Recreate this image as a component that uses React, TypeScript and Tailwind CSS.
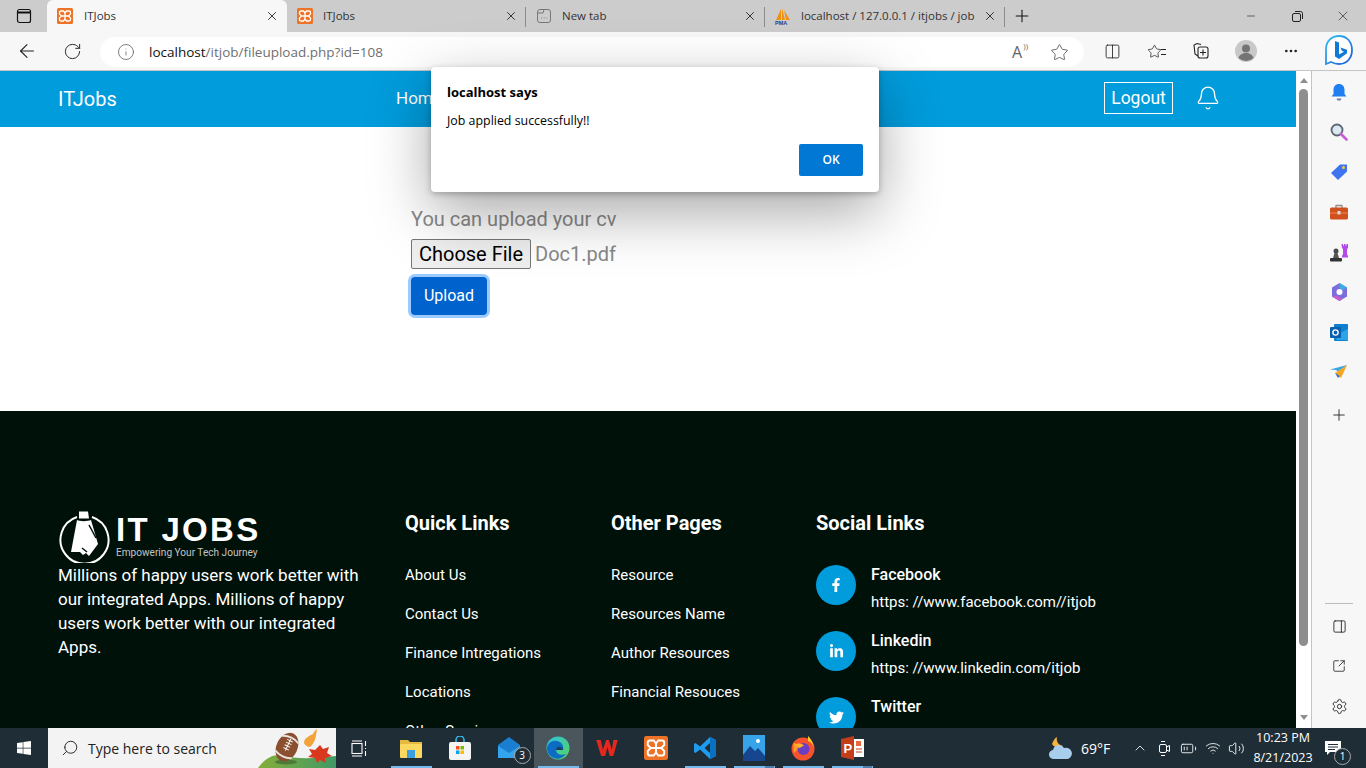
import React from 'react';
import {
  ArrowLeft, RotateCw, Info, Star, X, Plus, Minus, Bell, Search, ChevronUp,
  Columns2, Ellipsis, PanelRight, SquareArrowOutUpRight, Settings, Volume2, Wifi, BatteryMedium,
} from 'lucide-react';
import { FaFacebookF, FaLinkedinIn, FaTwitter, FaWindows } from 'react-icons/fa';

const UI_FONT = 'font-["Open_Sans","Noto_Sans",sans-serif]';

function Xampp({ size = 16 }: { size?: number }) {
  return (
    <svg width={size} height={size} viewBox="0 0 16 16" className="shrink-0">
      <rect width="16" height="16" rx="1.5" fill="#ee7326" />
      <path d="M4 3h2.5L8 5l1.5-2H12c1 0 1.500.5 1.500 1.500V6l-2 2 2 2v1.500c0 1-.5 1.500-1.500 1.500H9.500L8 11l-1.500 2H4c-1 0-1.500-.5-1.500-1.500V10l2-2-2-2V4.500C2.500 3.500 3 3 4 3zM4.500 8h7M8 5v6" fill="none" stroke="#fff" strokeWidth="1.3" />
    </svg>
  );
}

function PmaIcon() {
  return (
    <svg width="18" height="18" viewBox="0 0 18 18" className="shrink-0">
      <path d="M2 13 7 2v11zM8 13V1l3 12zM12 13 10 3l6 10z" fill="#f29111" />
      <text x="1" y="18" fontSize="5.5" fontWeight="700" fill="#24408e" fontFamily="Liberation Sans">PMA</text>
    </svg>
  );
}

function Tab({ width, active, icon, label, sep }: { width: string; active?: boolean; icon: React.ReactNode; label: string; sep?: boolean }) {
  return (
    <div className={`${width} h-[32px] flex items-center pl-[10px] pr-[8px] relative ${active ? 'bg-[#f7f7f7] rounded-t-[6px]' : ''}`}>
      <div className="w-[16px] flex justify-center">{icon}</div>
      <span className={`${active ? 'ml-[11px]' : 'ml-[10px]'} mr-[7px] text-[11.5px] text-[#333] whitespace-nowrap overflow-hidden flex-1`}>{label}</span>
      <X size={14} strokeWidth={1.5} className="text-[#222]" />
      {sep && <div className="absolute right-0 top-[7px] h-[20px] w-px bg-[#8c8c8c]" />}
    </div>
  );
}

function TopBar() {
  return (
    <div className={`h-[32px] bg-[#cccccc] flex ${UI_FONT}`}>
      <div className="w-[47px] flex items-center justify-center">
        <svg width="16" height="16" viewBox="0 0 16 16" fill="none" stroke="#111" strokeWidth="1.2">
          <rect x="1.5" y="1.5" width="13" height="13" rx="2" />
          <path d="M1.5 4.5h13" strokeWidth="2" />
        </svg>
      </div>
      <Tab width="w-[240px]" active icon={<Xampp />} label="ITJobs" />
      <Tab width="w-[239px]" icon={<Xampp />} label="ITJobs" sep />
      <Tab width="w-[239px]" icon={
        <svg width="16" height="16" viewBox="0 0 16 16" fill="none" stroke="#777" strokeWidth="1"><rect x="1.5" y="1.5" width="13" height="13" rx="2.5" /><path d="M1.5 5h5.500l1-3.500M5 10h.8M7.800 10h.8M10.500 10h.8" /></svg>
      } label="New tab" sep />
      <Tab width="w-[240px]" icon={<PmaIcon />} label="localhost / 127.0.0.1 / itjobs / job" sep />
      <div className="w-[33px] flex items-center justify-center">
        <Plus size={20} strokeWidth={1.25} className="text-[#111]" />
      </div>
      <div className="flex-1" />
      <div className="flex items-center text-[#222]">
        <div className="w-[46px] flex justify-center"><Minus size={12} strokeWidth={1.25} /></div>
        <div className="w-[46px] flex justify-center">
          <svg width="11" height="11" viewBox="0 0 11 11" fill="none" stroke="#222"><rect x=".5" y="2.5" width="8" height="8" rx="1.5" /><path d="M3 .5h5.500a2 2 0 0 1 2 2V8" /></svg>
        </div>
        <div className="w-[46px] flex justify-center"><X size={16} strokeWidth={1} /></div>
      </div>
    </div>
  );
}

function BingIcon() {
  return (
    <svg width="30" height="34" viewBox="0 0 30 34">
      <defs>
        <linearGradient id="bingBorder" x1="0" y1="0" x2="1" y2="1">
          <stop offset="0" stopColor="#36c0f0" />
          <stop offset="1" stopColor="#1c5cd8" />
        </linearGradient>
      </defs>
      <path d="M15 2C8 2 2 7 2 15v15l5-2c2 1 5 2 8 2 8 0 13-6 13-14S23 2 15 2z" fill="#fff" stroke="url(#bingBorder)" strokeWidth="1.8" />
      <path d="M11 7l4 1.500v12l5-2.800-2.200-1-1.300-3.200 6.500 2.300v3.500L15 25l-4-2.500z" fill="#0f7ad8" />
    </svg>
  );
}

function Toolbar() {
  return (
    <div className={`h-[38px] bg-[#f7f7f7] flex items-center ${UI_FONT}`}>
      <div className="w-[50px] flex justify-center pl-[4px]"><ArrowLeft size={22} strokeWidth={1.2} className="text-[#222]" /></div>
      <div className="w-[44px] flex justify-center"><RotateCw size={19} strokeWidth={1.2} className="text-[#222]" /></div>
      <div className="w-[984px] ml-[6px] h-[30px] mt-[2px] bg-white rounded-full flex items-center pl-[17px] pr-[15px]">
        <Info size={18} strokeWidth={1.1} className="text-[#666]" />
        <div className="ml-[14px] text-[13.5px] flex-1"><span className="text-[#111]">localhost</span><span className="text-[#707070]">/itjob/fileupload.php?id=108</span></div>
        <span className="text-[16px] text-[#666] mr-[28px] relative leading-none">A<span className="absolute -right-[6px] -top-[2px] text-[8px]">))</span></span>
        <Star size={19} strokeWidth={1.1} className="text-[#555]" />
      </div>
      <div className="flex-1 flex items-center text-[#222]">
        <div className="w-[44px] ml-[6px] flex justify-center"><Columns2 size={17} strokeWidth={1.2} /></div>
        <div className="w-[44px] flex justify-center relative"><Star size={15} strokeWidth={1.2} className="-ml-[3px]" /><div className="absolute right-[12px] top-[5px] w-[5px] h-[6px] border-y border-[#222]" /></div>
        <div className="w-[44px] flex justify-center">
          <svg width="17" height="18" viewBox="0 0 17 18" fill="none" stroke="#222" strokeWidth="1.1"><path d="M9 2.500 5 1.500 2 3l1 9 3 2" /><rect x="6" y="5" width="10" height="11" rx="2" /><path d="M11 7.500v6M8 10.500h6" /></svg>
        </div>
        <div className="w-[47px] flex justify-center">
          <svg width="22" height="22" viewBox="0 0 22 22"><circle cx="11" cy="11" r="11" fill="#c8c8c8" /><circle cx="11" cy="8.5" r="4" fill="#747474" /><path d="M3.500 18c1-3.500 4-5 7.500-5s6.500 1.500 7.500 5a11 11 0 0 1-15 0z" fill="#747474" /></svg>
        </div>
        <div className="w-[44px] flex justify-center"><Ellipsis size={16} strokeWidth={2} /></div>
        <div className="flex-1 flex justify-center pr-[2px]"><BingIcon /></div>
      </div>
    </div>
  );
}

function ScrollBar() {
  return (
    <div className="w-[15px] bg-white flex flex-col items-center">
      <div className="h-[18px] flex items-center justify-center">
        <div className="w-0 h-0 border-x-[4px] border-x-transparent border-b-[5px] border-b-[#8e8e8e]" />
      </div>
      <div className="w-[9px] h-[557px] bg-[#8e8e8e] rounded-full" />
      <div className="flex-1 flex items-end justify-center pb-[8px]">
        <div className="w-0 h-0 border-x-[4px] border-x-transparent border-t-[5px] border-t-[#8e8e8e]" />
      </div>
    </div>
  );
}

function SideSlot({ children }: { children: React.ReactNode }) {
  return <div className="h-[40px] flex items-center justify-center">{children}</div>;
}

function SidePanel() {
  return (
    <div className="flex-1 bg-[#f7f7f7] border-l border-[#c4c4c4] flex flex-col pt-[1px] pb-[2px]">
      <SideSlot>
        <svg width="16" height="18" viewBox="0 0 16 18"><path d="M8 1c3.500 0 5.500 2.500 5.500 6v4l2 2.500H.5l2-2.500V7C2.500 3.500 4.500 1 8 1z" fill="#1f7ef0" /><path d="M5.500 15.500h5l-1 2h-3z" fill="#6b7fa5" /></svg>
      </SideSlot>
      <SideSlot>
        <svg width="18" height="18" viewBox="0 0 18 18"><circle cx="7" cy="7" r="5.500" fill="#dbe7f3" stroke="#5d6570" strokeWidth="1.8" /><path d="M11 11l5.500 5.500" stroke="#c65cd6" strokeWidth="2.6" strokeLinecap="round" /></svg>
      </SideSlot>
      <SideSlot>
        <svg width="18" height="18" viewBox="0 0 18 18"><path d="M1 10 10 1.500h7v7L8 17z" fill="#3f74f0" /><circle cx="13.5" cy="4.500" r="1.500" fill="#f5c945" /></svg>
      </SideSlot>
      <SideSlot>
        <svg width="18" height="16" viewBox="0 0 18 16"><path d="M6 4V1.500h6V4" fill="none" stroke="#8f8f8f" strokeWidth="1.3" /><rect y="3.5" width="18" height="12" rx="1.5" fill="#d0501e" /><rect y="8.5" width="18" height="1" fill="#f08a50" /><rect x="7.5" y="7" width="3" height="3.5" fill="#d8d8d8" /></svg>
      </SideSlot>
      <SideSlot>
        <svg width="19" height="19" viewBox="0 0 19 19"><path d="M11.500 1h1.500v1.500h1V1h1.500v1.500h1V1h1.500v4l-1 1v5l1 2v1.500h-6V13l1-2V6l-1-1z" fill="#b64ae8" /><circle cx="6" cy="8" r="2.5" fill="#4b4b4b" /><path d="M4.500 10h3l1.500 5H3z" fill="#555" /><rect y="15" width="12" height="3.5" rx="1" fill="#333" /></svg>
      </SideSlot>
      <SideSlot>
        <svg width="17" height="18" viewBox="0 0 17 18"><path d="M8.500 0 16 4.500v9L8.500 18 1 13.500v-9z" fill="#7b6fdc" /><path d="M8.500 0 16 4.500 12 7 8.500 5z" fill="#3bb0e0" /><path d="M1 13.500 8.500 18l3-2-6-3.500z" fill="#c45fc8" /><circle cx="8.5" cy="9" r="3" fill="#fff" /></svg>
      </SideSlot>
      <SideSlot>
        <svg width="18" height="17" viewBox="0 0 18 17"><rect x="4" y="0" width="14" height="17" rx="1" fill="#0e7fd0" /><path d="M10 9 18 5v11H6z" fill="#2ba5e8" /><rect y="3" width="11" height="11" rx="1" fill="#0a5fae" /><circle cx="5.5" cy="8.5" r="2.6" fill="none" stroke="#fff" strokeWidth="1.4" /></svg>
      </SideSlot>
      <SideSlot>
        <svg width="18" height="14" viewBox="0 0 18 14"><path d="M0 4.500 17 0 9 7.500 6 5z" fill="#36a6e8" /><path d="M17 0 11 13 5 8z" fill="#f5a623" /><path d="M5 8l3 5 2-2z" fill="#2a78c8" /></svg>
      </SideSlot>
      <div className="mt-[3px]">
        <SideSlot><Plus size={18} strokeWidth={1.2} className="text-[#222]" /></SideSlot>
      </div>
      <div className="flex-1" />
      <div className="mx-[13px] h-px bg-[#bdbdbd] mb-[2px]" />
      <SideSlot><PanelRight size={15} strokeWidth={1.4} className="text-[#222]" /></SideSlot>
      <SideSlot><SquareArrowOutUpRight size={14} strokeWidth={1.4} className="text-[#222]" /></SideSlot>
      <SideSlot><Settings size={17} strokeWidth={1.3} className="text-[#222]" /></SideSlot>
    </div>
  );
}

function Navbar() {
  return (
    <div className="h-[56px] bg-[#009cdc] flex items-center pl-[58px] pr-[75px] text-white">
      <div className="w-[338px] text-[20px]">ITJobs</div>
      <div className="text-[17px]">Home</div>
      <div className="ml-auto mb-[2px] h-[32px] w-[69px] border border-white flex items-center justify-center text-[17.5px] pt-[1px]">Logout</div>
      <Bell size={26} strokeWidth={1.2} className="ml-[22px] mb-[2px]" />
    </div>
  );
}

function UploadSection() {
  return (
    <div className="h-[284px] bg-white pl-[411px] pt-[80px] text-[#888]">
      <div className="text-[20px] leading-[24px]">You can upload your cv</div>
      <div className="mt-[8px] flex items-center text-[20px] h-[30px]">
        <div className="w-[120px] h-[30px] bg-[#efefef] border border-[#767676] rounded-[2px] text-black flex items-center justify-center">Choose File</div>
        <span className="ml-[4px]">Doc1.pdf</span>
      </div>
      <button className="mt-[8px] w-[76px] h-[38px] bg-[#0062cc] text-white text-[16px] rounded-[4px] ring-[3px] ring-[#9bcbff]">Upload</button>
    </div>
  );
}

function Logo() {
  return (
    <div className="flex h-[53px]">
      <svg width="52" height="53" viewBox="0 0 52 53" className="shrink-0">
        <path d="M19 7A24 24 0 1 0 34 7" fill="none" stroke="#fff" strokeWidth="2" />
        <path d="M21 1.500h9l1 7h-10z" fill="#fff" />
        <path d="M19 10c2 1.500 11 1.500 14 0l7 24-9 12-3-3-3 2-3-3-9 0z" fill="#fff" />
        <path d="M31 15l7 13" stroke="#001109" strokeWidth="1.5" />
        <path d="M24 38l5 4" stroke="#001109" strokeWidth="1.5" />
      </svg>
      <div className="ml-[6px] font-['Liberation_Sans',sans-serif] leading-none">
        <div className="text-[33px] font-bold text-white tracking-[2.3px] h-[33px] mt-[3px] leading-[33px] whitespace-nowrap">IT JOBS</div>
        <div className="text-[10.1px] text-[#c4c4c4] mt-[2px] whitespace-nowrap font-['Roboto',sans-serif]">Empowering Your Tech Journey</div>
      </div>
    </div>
  );
}

function FooterLinks({ title, width, links }: { title: string; width: string; links: string[] }) {
  return (
    <div className={width}>
      <h3 className="text-[20px] leading-[24px] font-bold text-white">{title}</h3>
      <div className="mt-[28px] flex flex-col gap-[15px]">
        {links.map(l => <div key={l} className="text-[15px] leading-[24px] text-white whitespace-nowrap">{l}</div>)}
      </div>
    </div>
  );
}

const SOCIALS = [
  { name: 'Facebook', url: 'https: //www.facebook.com//itjob', icon: <FaFacebookF size={14} /> },
  { name: 'Linkedin', url: 'https: //www.linkedin.com/itjob', icon: <FaLinkedinIn size={15} /> },
  { name: 'Twitter', url: '', icon: <FaTwitter size={15} /> },
];

function Footer() {
  return (
    <div className="bg-[#001109] pl-[58px] pt-[100px] pb-[60px] flex text-white">
      <div className="w-[347px] -mt-[1px]">
        <Logo />
        <p className="w-[310px] text-[17px] leading-[24px]">Millions of happy users work better with our integrated Apps. Millions of happy users work better with our integrated Apps.</p>
      </div>
      <FooterLinks title="Quick Links" width="w-[206px]" links={['About Us', 'Contact Us', 'Finance Intregations', 'Locations', 'Other Services']} />
      <FooterLinks title="Other Pages" width="w-[205px]" links={['Resource', 'Resources Name', 'Author Resources', 'Financial Resouces']} />
      <div>
        <h3 className="text-[20px] leading-[24px] font-bold">Social Links</h3>
        <div className="mt-[30px] flex flex-col gap-[26px]">
          {SOCIALS.map(s => (
            <div key={s.name} className="flex h-[40px]">
              <div className="w-[40px] h-[40px] rounded-full bg-[#009cdc] flex items-center justify-center">{s.icon}</div>
              <div className="ml-[15px] -mt-[2px]">
                <div className="text-[16px] leading-[24px] font-medium">{s.name}</div>
                {s.url && <div className="text-[15px] leading-[24px] mt-[3px] whitespace-nowrap">{s.url}</div>}
              </div>
            </div>
          ))}
        </div>
      </div>
    </div>
  );
}

function AlertDialog() {
  return (
    <div className={`absolute left-[431px] top-[67px] w-[448px] h-[125px] bg-white rounded-[4px] shadow-[0_20px_60px_rgba(0,0,0,0.35),0_2px_6px_rgba(0,0,0,0.25)] px-[16px] pt-[16px] text-black ${UI_FONT}`}>
      <div className="text-[13px] leading-[18px] font-bold">localhost says</div>
      <div className="text-[12.4px] leading-[18px] mt-[11px]">Job applied successfully!!</div>
      <div className="flex justify-end mt-[14px]">
        <div className="w-[64px] h-[32px] bg-[#0078d4] rounded-[2px] text-white text-[12px] font-semibold flex items-center justify-center">OK</div>
      </div>
    </div>
  );
}

function Football() {
  return (
    <svg width="96" height="40" viewBox="0 0 96 40" className="shrink-0">
      <defs>
        <linearGradient id="hill" x1="0" y1="0" x2="1" y2="0">
          <stop offset="0" stopColor="#86ad3a" />
          <stop offset="1" stopColor="#3f9a66" />
        </linearGradient>
      </defs>
      <path d="M18 40C24 32 30 27 40 27c20 5 35 3 56 1v12z" fill="url(#hill)" />
      <ellipse cx="46" cy="34" rx="11" ry="2.500" fill="#4e7a38" />
      <g transform="rotate(25 47 19)">
        <ellipse cx="47" cy="19" rx="10.500" ry="15" fill="#8a4f2e" />
        <path d="M38 27c5 3 13 3 18 0M38 11c5-3 13-3 18 0" stroke="#e8e2dc" strokeWidth="2" fill="none" />
        <path d="M47 10v13M44 12h6M44 15h6M44 18h6M44 21h6" stroke="#fff" strokeWidth="1" />
      </g>
      <path d="M64 15c0-5 5-7 9-9 1-2 2-4 4-5-1 6-1 13-7 18-3 0-5-2-6-4z" fill="#f2a33a" />
      <path d="M80 17l3 4 6-2-2 6 5 3-7 2 1 5-6-3-3 3-2-5-7-1 4-3-3-5 6 1z" fill="#d9381e" />
    </svg>
  );
}

function TaskSlot({ children, active, open, stack }: { children: React.ReactNode; active?: boolean; open?: boolean; stack?: boolean }) {
  return (
    <div className={`w-[49px] h-[40px] relative flex items-center justify-center ${active ? 'bg-[#4a555c]' : ''}`}>
      {children}
      {open && <div className="absolute bottom-0 left-[4px] h-[2px] w-[41px] bg-[#76b9ed]" />}
      {stack && <div className="absolute bottom-0 left-[35px] h-[2px] w-[9px] bg-[#4f7ea8]" />}
    </div>
  );
}

function Taskbar() {
  return (
    <div className={`h-[40px] bg-[#1f2d36] flex items-center text-white ${UI_FONT}`}>
      <div className="w-[48px] flex justify-center"><FaWindows size={16} /></div>
      <div className="w-[288px] h-[40px] bg-[#f3f3f3] flex items-center pl-[13px] text-[#222] overflow-hidden">
        <Search size={18} strokeWidth={1.25} className="-scale-x-100" />
        <span className="ml-[9px] text-[14px] flex-1 whitespace-nowrap">Type here to search</span>
        <Football />
      </div>
      <div className="w-[50.5px] flex justify-center pr-[3px]">
        <svg width="17" height="17" viewBox="0 0 17 17" fill="none" stroke="#fff" strokeWidth="1.1"><rect x="1" y="3.5" width="10" height="10" /><path d="M1 1h10M1 16h10M14.500 1v5M14.500 8v1M14.500 11v5" /></svg>
      </div>
      <TaskSlot open>
        <svg width="24" height="22" viewBox="0 0 24 22"><path d="M1 3h8l2 2h12v3H1z" fill="#e6b93f" /><rect x="1" y="7" width="22" height="14" rx="1" fill="#fcd860" /><rect x="8" y="13" width="8" height="8" fill="#3a9fe0" /></svg>
      </TaskSlot>
      <TaskSlot>
        <svg width="24" height="24" viewBox="0 0 24 24"><path d="M8 6V4a4 4 0 0 1 8 0v2" fill="none" stroke="#35c0f0" strokeWidth="1.5" /><rect x="1" y="6" width="22" height="18" rx="2" fill="#f4f4f4" /><rect x="8" y="10" width="3.5" height="3.5" fill="#f25022" /><rect x="12.5" y="10" width="3.5" height="3.5" fill="#7fba00" /><rect x="8" y="14.5" width="3.5" height="3.5" fill="#00a4ef" /><rect x="12.5" y="14.5" width="3.5" height="3.5" fill="#ffb900" /></svg>
      </TaskSlot>
      <TaskSlot>
        <svg width="24" height="24" viewBox="0 0 24 24"><path d="M1 9 12 1l11 8v13H1z" fill="#1a7fd0" /><path d="M1 10l11 7 11-7v12H1z" fill="#35a4ee" /></svg>
        <div className="absolute left-[29px] top-[19px] w-[17px] h-[17px] rounded-full bg-[#1f2d36] border border-[#aaa] text-[10px] flex items-center justify-center">3</div>
      </TaskSlot>
      <TaskSlot active open>
        <svg width="24" height="24" viewBox="0 0 24 24">
          <defs>
            <linearGradient id="edgeGreen" x1="0" y1="0" x2="1" y2="1"><stop offset="0" stopColor="#2fc2e0" /><stop offset="1" stopColor="#56d35f" /></linearGradient>
          </defs>
          <circle cx="12" cy="12" r="11.5" fill="url(#edgeGreen)" />
          <path d="M1 12C2 6 7 4 11 5c5 1 7 5 6 9h-7c0 4 5 6 10 4-3 4-8 6-12 4-5-2-7-6-7-10z" fill="#0c6cc4" />
          <path d="M10 14c0-2 2-4 4-3 2 0 3 2 3 3z" fill="#1f2d36" opacity="0.7" />
        </svg>
      </TaskSlot>
      <TaskSlot>
        <svg width="22" height="18" viewBox="0 0 24 20"><path d="M0 1h5l2.500 11L11 1h3l3.500 11L19 1h5l-5 18h-4L12.500 9 10 19H5.500z" fill="#e5281d" /></svg>
      </TaskSlot>
      <TaskSlot><Xampp size={24} /></TaskSlot>
      <TaskSlot open>
        <svg width="24" height="24" viewBox="0 0 24 24"><path d="M17 1 23 4v16l-6 3L7 13.500 2.500 17 1 16v-8l1.500-1L7 10.500zM17 7l-5.500 5 5.500 5z" fill="#1f9cf0" /><path d="M17 1 23 4v16l-6 3z" fill="#0a70c0" /></svg>
      </TaskSlot>
      <TaskSlot open stack>
        <svg width="22" height="26" viewBox="0 0 22 26"><rect width="22" height="26" fill="#37a3e8" /><path d="M0 20l7-9 5 5 3-3 7 8v5H0z" fill="#17468f" /><circle cx="15" cy="6" r="2" fill="#fff" /></svg>
      </TaskSlot>
      <TaskSlot open>
        <svg width="24" height="26" viewBox="0 0 24 26">
          <circle cx="12" cy="14" r="11.5" fill="#f5532d" />
          <path d="M17 1c5 5 6 10 6 13 0-4-3-7-6-8z" fill="#ffcb2d" />
          <path d="M2 8c1 4 0 6 1 10l8-8z" fill="#ff9a22" />
          <circle cx="12.5" cy="14" r="6" fill="#6a3fc4" />
          <path d="M4 10c3-2 7-2 9 1-2 0-3 1-4 2-2 0-4-1-5-3z" fill="#ffb02a" />
        </svg>
      </TaskSlot>
      <TaskSlot open stack>
        <svg width="23" height="24" viewBox="0 0 23 24"><path d="M0 3l13-3v24L0 21z" fill="#c43e1c" /><rect x="13" y="3" width="10" height="18" fill="#fff" /><rect x="15" y="5" width="5" height="5" fill="#e86a3c" /><path d="M15 13h6M15 16h6" stroke="#c43e1c" /><text x="2.5" y="17" fontSize="13" fontWeight="700" fill="#fff" fontFamily="Liberation Sans">P</text></svg>
      </TaskSlot>
      <div className="flex-1" />
      <svg width="24" height="25" viewBox="0 0 24 25" className="mr-[8px]">
        <path d="M8 1c-1 4 1 8 6 9-3 2-9 2-11-2 1-3 3-6 5-7z" fill="#f5b53d" />
        <path d="M5 23a4.500 4.500 0 0 1-1-9 6 6 0 0 1 11-2 5.500 5.500 0 0 1 4 11z" fill="#a9cdec" />
      </svg>
      <span className="text-[14px] w-[51px] whitespace-nowrap">69°F</span>
      <ChevronUp size={16} strokeWidth={1.25} />
      <div className="ml-[7px] w-[18px] flex justify-center">
        <svg width="13" height="17" viewBox="0 0 13 17" fill="none" stroke="#fff"><rect x="1.5" y="4.500" width="7" height="8" rx="1.5" /><path d="M8.500 7l3-1.500v6l-3-1.500M3 1.500h4M3 15.500h4" /></svg>
      </div>
      <BatteryMedium size={17} strokeWidth={1.25} className="ml-[7px]" />
      <Wifi size={16} strokeWidth={1.25} className="ml-[8px]" />
      <Volume2 size={17} strokeWidth={1.25} className="ml-[7px]" />
      <div className="w-[60px] ml-[8px] text-[12.5px] leading-[20px] text-center whitespace-nowrap">
        <div>10:23 PM</div>
        <div>8/21/2023</div>
      </div>
      <div className="w-[40px] relative flex justify-center">
        <svg width="16" height="15" viewBox="0 0 16 15" fill="#fff"><path d="M0 0h16v11H5l-3 3v-3H0z" /><path d="M3 3.500h10M3 6h10M3 8.500h7" stroke="#1f2d36" /></svg>
        <div className="absolute left-[21px] top-[7px] w-[17px] h-[17px] rounded-full bg-[#1f2d36] border border-[#aaa] text-[10px] flex items-center justify-center">1</div>
      </div>
      <div className="w-[13px]" />
    </div>
  );
}

export default function App() {
  return (
    <div className="w-[1366px] h-[768px] overflow-hidden relative font-['Roboto',sans-serif]">
      <TopBar />
      <Toolbar />
      <div className="h-[658px] flex border-t border-[#c4c4c4]">
        <div className="w-[1296px] h-full overflow-hidden">
          <Navbar />
          <UploadSection />
          <Footer />
        </div>
        <ScrollBar />
        <SidePanel />
      </div>
      <Taskbar />
      <AlertDialog />
    </div>
  );
}
